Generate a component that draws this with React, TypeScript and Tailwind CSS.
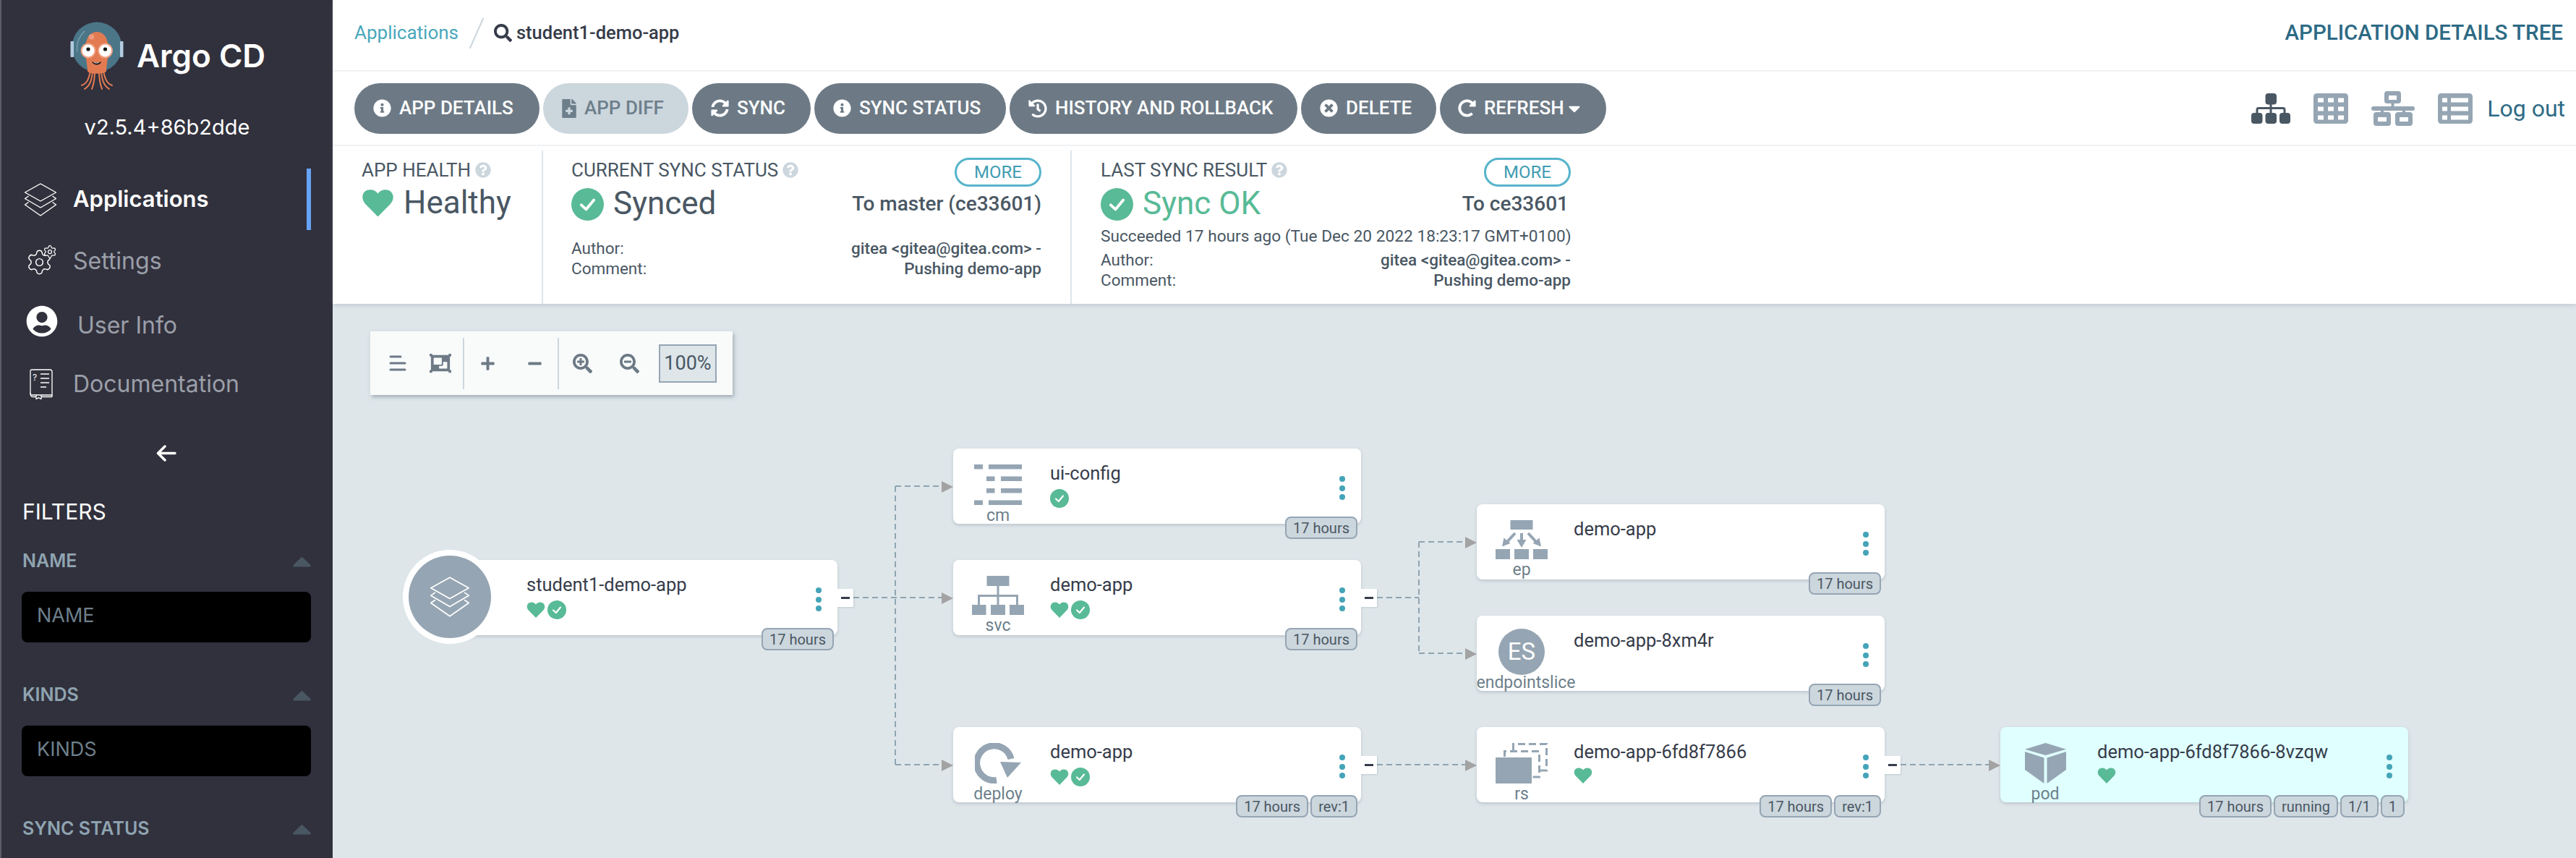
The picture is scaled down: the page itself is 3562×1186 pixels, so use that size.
import type { ReactNode } from "react";
import { Settings } from "lucide-react";
import {
  FaCaretDown,
  FaFileMedical,
  FaHistory,
  FaInfoCircle,
  FaMinus,
  FaObjectGroup,
  FaPlus,
  FaQuestionCircle,
  FaRedoAlt,
  FaSearch,
  FaSearchMinus,
  FaSearchPlus,
  FaSyncAlt,
  FaTimesCircle,
  FaUserCircle,
} from "react-icons/fa";

function ArgoLogo() {
  return (
    <svg viewBox="12 10 74 94" className="h-[94px] w-[74px] shrink-0">
      <circle cx="49" cy="45" r="34.5" fill="#4a7688" />
      <rect x="12.5" y="37" width="4.5" height="22" rx="1" fill="#b3cbe0" />
      <rect x="81" y="37" width="4.5" height="22" rx="1" fill="#b3cbe0" />
      <path d="M32 23 C25 30 20 40 22 52" fill="none" stroke="#7fa3b0" strokeWidth="1.2" />
      <g fill="none" stroke="#e27b52" strokeWidth="2" strokeLinecap="round">
        <path d="M40 78 C38 88 36 95 28 98" />
        <path d="M43 78 C42 90 40 98 32 103" />
        <path d="M46 78 C46 90 44 98 42 103" />
        <path d="M52 78 C52 90 54 98 56 103" />
        <path d="M55 78 C56 90 58 98 66 103" />
        <path d="M58 78 C60 88 62 95 70 98" />
      </g>
      <path
        d="M33 48 C33 32 40 24 49 24 C58 24 65 32 65 48 C65 60 62 70 62 78 C62 83 36 83 36 78 C36 70 33 60 33 48 Z"
        fill="#e27b52"
      />
      <circle cx="41.5" cy="31" r="3.8" fill="#f09a7c" />
      <circle cx="37" cy="50" r="10.5" fill="#f3a184" />
      <circle cx="60.5" cy="50" r="10.5" fill="#f3a184" />
      <circle cx="37" cy="50" r="8.5" fill="#ffffff" />
      <circle cx="60.5" cy="50" r="8.5" fill="#ffffff" />
      <circle cx="37" cy="48" r="2.6" fill="#111111" />
      <circle cx="60.5" cy="48" r="2.6" fill="#111111" />
      <path d="M42 65 C46 67 51 67 55 65 C54 71 44 71 42 65 Z" fill="#111111" />
      <path d="M44 66 C47 67 50 67 53 66 C51 68 46 68 44 66 Z" fill="#ffffff" />
    </svg>
  );
}

function LayersIcon({ className }: { className: string }) {
  return (
    <svg viewBox="0 0 46 46" className={className} fill="none" stroke="#ffffff" strokeWidth="1.4" strokeLinejoin="round">
      <path d="M23 1 L44.5 13 L23 25 L1.5 13 Z" />
      <path d="M6.5 18 L1.5 21.5 L23 34 L44.5 21.5 L39.5 18" />
      <path d="M6.5 26.5 L1.5 30 L23 45 L44.5 30 L39.5 26.5" />
    </svg>
  );
}

function DocIcon() {
  return (
    <svg viewBox="0 0 32 42" className="h-[42px] w-[32px]" fill="none" stroke="#ffffff" strokeWidth="1.3">
      <path d="M3 1 H28 Q31 1 31 4 V36 H3 Q1 36 1 33 V3 Q1 1 3 1 Z" />
      <path d="M1 33 Q1 38.5 4 38.5 H9 M16 38.5 H31 M31 36 V38.5" />
      <path d="M9 36 V42 L12.5 39.5 L16 42 V36" />
      <path d="M15 7 H27 M15 13 H27 M15 19 H27 M15 25 H23" />
      <text x="4" y="16" fontSize="12" fill="#ffffff" stroke="none" fontFamily="Inter, sans-serif">
        ?
      </text>
    </svg>
  );
}

function ArrowBack() {
  return (
    <svg viewBox="0 0 28 23" className="h-[23px] w-[28px]" fill="none" stroke="#ffffff" strokeWidth="3.5" strokeLinecap="round" strokeLinejoin="round">
      <path d="M12 2 L2.5 11.5 L12 21 M2.5 11.5 H26" />
    </svg>
  );
}

function FilterCaret() {
  return (
    <svg viewBox="0 0 25 15" className="h-[15px] w-[25px]">
      <path d="M12.5 2 L23.5 12.5 Q24 13.5 23 13.5 H2 Q1 13.5 1.5 12.5 Z" fill="#495763" stroke="#495763" strokeWidth="2" strokeLinejoin="round" />
    </svg>
  );
}

function FilterSection({ label, placeholder }: { label: string; placeholder?: string }) {
  return (
    <div className="ml-[28px] mr-[30px]">
      <div className="flex h-[30px] items-center justify-between pl-[1px]">
        <span className="text-[25px] font-semibold text-[#8fa4b1]">{label}</span>
        <FilterCaret />
      </div>
      {placeholder ? (
        <div className="mt-[27px] flex h-[70px] items-start rounded-[8px] bg-black pl-[21px] pt-[17px] text-[27px] leading-[32px] text-[#6d7f8b]">
          {placeholder}
        </div>
      ) : null}
    </div>
  );
}

function Sidebar() {
  return (
    <aside className="h-[1186px] w-[460px] shrink-0 overflow-hidden border-l-2 border-[#5b5c68] bg-[#31313d] font-[Inter,sans-serif] text-white">
      <div className="mt-[30px] flex h-[94px] items-center pl-[95px]">
        <ArgoLogo />
        <span className="ml-[18px] text-[44px] font-semibold leading-none">Argo CD</span>
      </div>
      <div className="mt-[34px] h-[36px] text-center text-[29px] leading-[36px]">v2.5.4+86b2dde</div>

      <nav className="relative mt-[39px]">
        <div className="flex h-[85px] items-center pl-[31px]">
          <LayersIcon className="h-[46px] w-[46px]" />
          <span className="ml-[22px] text-[31px] font-semibold">Applications</span>
        </div>
        <div className="absolute left-[422px] top-0 h-[85px] w-[6px] bg-[#66a3f5]" />
        <div className="flex h-[85px] items-center pl-[33px] text-[#9b9fa9]">
          <div className="relative h-[42px] w-[42px]">
            <Settings className="absolute left-0 top-[3px] h-[39px] w-[39px] text-white" strokeWidth={0.9} />
            <Settings className="absolute right-[-2px] top-[-2px] h-[20px] w-[20px] fill-[#31313d] text-white" strokeWidth={1.5} />
          </div>
          <span className="ml-[24px] text-[32px]">Settings</span>
        </div>
        <div className="flex h-[87px] items-center pl-[34px] text-[#9b9fa9]">
          <FaUserCircle className="mt-[-6px] h-[44px] w-[44px] text-white" />
          <span className="ml-[27px] mt-[6px] text-[32px]">User Info</span>
        </div>
        <div className="flex h-[82px] items-center pl-[39px] text-[#9b9fa9]">
          <DocIcon />
          <span className="ml-[28px] text-[32px]">Documentation</span>
        </div>
      </nav>

      <div className="mt-[43px] flex h-[23px] justify-center pr-[2px]">
        <ArrowBack />
      </div>
      <div className="mx-[29px] mt-[49px] h-[40px] text-[30px] leading-[40px]">FILTERS</div>
      <div className="mt-[34px] flex flex-col gap-[58px]">
        <FilterSection label="NAME" placeholder="NAME" />
        <FilterSection label="KINDS" placeholder="KINDS" />
        <FilterSection label="SYNC STATUS" />
      </div>
    </aside>
  );
}

const actions = [
  { label: "APP DETAILS", icon: <FaInfoCircle className="h-[25px] w-[25px]" />, width: "w-[256px]" },
  { label: "APP DIFF", icon: <FaFileMedical className="h-[26px] w-[20px]" />, width: "w-[201px]", disabled: true },
  { label: "SYNC", icon: <FaSyncAlt className="h-[25px] w-[25px]" />, width: "w-[164px]" },
  { label: "SYNC STATUS", icon: <FaInfoCircle className="h-[25px] w-[25px]" />, width: "w-[265px]" },
  { label: "HISTORY AND ROLLBACK", icon: <FaHistory className="h-[26px] w-[26px]" />, width: "w-[398px]" },
  { label: "DELETE", icon: <FaTimesCircle className="h-[25px] w-[25px]" />, width: "w-[187px]" },
];

function ActionButton({ label, icon, width, disabled }: { label: string; icon: ReactNode; width: string; disabled?: boolean }) {
  return (
    <div
      className={`flex h-[70px] items-center gap-[11px] rounded-full pl-[26px] text-[26px] font-medium ${width} ${
        disabled ? "bg-[#ccd6dd] text-[#6d7f8b]" : "bg-[#6d7a86] text-white"
      }`}
    >
      {icon}
      <span>{label}</span>
    </div>
  );
}

function TreeViewIcon() {
  return (
    <svg viewBox="0 0 54 42" className="h-[42px] w-[54px]" fill="#495763">
      <rect x="19.5" y="0" width="15.5" height="15.5" rx="4" />
      <rect x="0" y="27" width="15.5" height="15" rx="4" />
      <rect x="19.5" y="27" width="15.5" height="15" rx="4" />
      <rect x="39" y="27" width="15" height="15" rx="4" />
      <path d="M27 15 V28 M8 28 V22.5 Q8 20.5 10 20.5 H44 Q46 20.5 46 22.5 V28" fill="none" stroke="#495763" strokeWidth="3" />
    </svg>
  );
}

function GridViewIcon() {
  return (
    <svg viewBox="0 0 48 42" className="h-[42px] w-[48px]">
      <path
        fillRule="evenodd"
        fill="#95a5b3"
        d="M5 0 H43 Q48 0 48 5 V37 Q48 42 43 42 H5 Q0 42 0 37 V5 Q0 0 5 0 Z M6 6.5 V12.5 H14 V6.5 Z M20 6.5 V12.5 H28 V6.5 Z M34 6.5 V12.5 H42 V6.5 Z M6 18.5 V24.5 H14 V18.5 Z M20 18.5 V24.5 H28 V18.5 Z M34 18.5 V24.5 H42 V18.5 Z M6 30.5 V36.5 H14 V30.5 Z M20 30.5 V36.5 H28 V30.5 Z M34 30.5 V36.5 H42 V30.5 Z"
      />
    </svg>
  );
}

function NetworkViewIcon() {
  return (
    <svg viewBox="0 0 60 48" className="h-[48px] w-[60px]">
      <path
        fillRule="evenodd"
        fill="#95a5b3"
        d="M22 0 H37 Q41 0 41 4 V13 Q41 17 37 17 H22 Q18 17 18 13 V4 Q18 0 22 0 Z M24 6 V12 H35 V6 Z"
      />
      <path
        fillRule="evenodd"
        fill="#95a5b3"
        d="M7 29 H23 Q27 29 27 33 V44 Q27 48 23 48 H7 Q3 48 3 44 V33 Q3 29 7 29 Z M9 36 V42 H21 V36 Z M37 29 H53 Q57 29 57 33 V44 Q57 48 53 48 H37 Q33 48 33 44 V33 Q33 29 37 29 Z M39 36 V42 H51 V36 Z"
      />
      <rect x="0" y="21" width="60" height="6" rx="3" fill="#95a5b3" />
      <path d="M29.5 16 V22 M15 26 V30 M45 26 V30" stroke="#95a5b3" strokeWidth="4" />
    </svg>
  );
}

function ListViewIcon() {
  return (
    <svg viewBox="0 0 48 42" className="h-[42px] w-[48px]">
      <path
        fillRule="evenodd"
        fill="#95a5b3"
        d="M5 0 H43 Q48 0 48 5 V37 Q48 42 43 42 H5 Q0 42 0 37 V5 Q0 0 5 0 Z M6 6.5 V12.5 H13 V6.5 Z M18 6.5 V12.5 H42 V6.5 Z M6 18.5 V24.5 H13 V18.5 Z M18 18.5 V24.5 H42 V18.5 Z M6 30.5 V36.5 H13 V30.5 Z M18 30.5 V36.5 H42 V30.5 Z"
      />
    </svg>
  );
}

function HelpTip() {
  return <FaQuestionCircle className="h-[22px] w-[22px] text-[#ccd6dd]" />;
}

function HeartIcon({ className }: { className: string }) {
  return (
    <svg viewBox="0 0 26 22" className={className}>
      <path
        d="M13 22 L3 11.8 C-1.4 7 1 0.4 7 0.4 C9.8 0.4 12 2 13 3.6 C14 2 16.2 0.4 19 0.4 C25 0.4 27.4 7 23 11.8 Z"
        fill="#58ba96"
      />
    </svg>
  );
}

function CheckIcon({ className }: { className: string }) {
  return (
    <svg viewBox="0 0 26 26" className={className}>
      <circle cx="13" cy="13" r="13" fill="#58ba96" />
      <path d="M8 13.5 L11.8 17 L18 9.5" fill="none" stroke="#ffffff" strokeWidth="2.2" strokeLinecap="round" strokeLinejoin="round" />
    </svg>
  );
}

function MoreButton() {
  return (
    <div className="flex h-[40px] w-[120px] items-center justify-center rounded-full border-[3px] border-[#56b4cb] text-[24px] text-[#3f9db2]">
      MORE
    </div>
  );
}

function AuthorRows({ className }: { className: string }) {
  return (
    <div className={`text-[22.5px] leading-[28px] text-[#495763] ${className}`}>
      <div className="flex justify-between">
        <span>Author:</span>
        <span className="font-medium">gitea &lt;gitea@gitea.com&gt; -</span>
      </div>
      <div className="flex justify-between">
        <span>Comment:</span>
        <span className="font-medium">Pushing demo-app</span>
      </div>
    </div>
  );
}

function StatusLabel({ text }: { text: string }) {
  return (
    <div className="flex h-[34px] items-center gap-[6px] text-[26px] text-[#495763]">
      <span>{text}</span>
      <HelpTip />
    </div>
  );
}

function Header() {
  return (
    <div className="relative z-10 h-[420px] shrink-0 bg-white shadow-[0_2px_6px_rgba(109,122,134,0.25)]">
      <div className="flex h-[99px] items-center justify-between border-b-2 border-[#eff3f6] pb-[6px] pl-[30px] pr-[18px]">
        <div className="flex items-center">
          <span className="text-[26px] text-[#4aa8bb]">Applications</span>
          <span className="ml-[24px] mr-[23px] h-[46px] w-[2px] rotate-[24deg] bg-[#ccd6dd]" />
          <FaSearch className="h-[25px] w-[25px] text-[#363c4a]" />
          <span className="ml-[6px] text-[25.5px] font-medium text-[#363c4a]">student1-demo-app</span>
        </div>
        <span className="text-[29.5px] font-medium text-[#2d6a85]">APPLICATION DETAILS TREE</span>
      </div>

      <div className="flex h-[103px] items-center justify-between border-b-2 border-[#eff3f6] pl-[30px] pr-[15px]">
        <div className="flex gap-[5px]">
          {actions.map((action) => (
            <ActionButton key={action.label} {...action} />
          ))}
          <div className="flex h-[70px] w-[230px] items-center rounded-full bg-[#6d7a86] pl-[25px] text-[26px] font-medium text-white">
            <FaRedoAlt className="h-[25px] w-[25px]" />
            <span className="ml-[11px]">REFRESH</span>
            <FaCaretDown className="ml-[5px] h-[26px] w-[18px]" />
          </div>
        </div>
        <div className="flex items-center">
          <TreeViewIcon />
          <div className="ml-[32px]">
            <GridViewIcon />
          </div>
          <div className="ml-[32px]">
            <NetworkViewIcon />
          </div>
          <div className="ml-[32px]">
            <ListViewIcon />
          </div>
          <span className="ml-[20px] text-[32px] text-[#2d6a85]">Log out</span>
        </div>
      </div>

      <div className="flex h-[218px]">
        <div className="mt-[6px] w-[291px] border-r-2 border-[#dee6eb] pl-[40px] pt-[10px]">
          <StatusLabel text="APP HEALTH" />
          <div className="mt-[3px] flex items-center gap-[13px] text-[44px] leading-[50px] text-[#495763]">
            <HeartIcon className="h-[39px] w-[45px]" />
            <span>Healthy</span>
          </div>
        </div>
        <div className="mt-[6px] w-[731px] border-r-2 border-[#dee6eb] pl-[39px] pr-[40px] pt-[10px]">
          <div className="flex items-start justify-between">
            <StatusLabel text="CURRENT SYNC STATUS" />
            <MoreButton />
          </div>
          <div className="mt-[1px] flex h-[46px] items-center justify-between">
            <div className="flex items-center gap-[13px] text-[44px] text-[#495763]">
              <CheckIcon className="h-[45px] w-[45px]" />
              <span className="mt-[-2px]">Synced</span>
            </div>
            <span className="text-[28px] font-medium text-[#495763]">To master (ce33601)</span>
          </div>
          <AuthorRows className="mt-[24px]" />
        </div>
        <div className="mt-[6px] w-[690px] pl-[40px] pt-[10px]">
          <div className="flex items-start justify-between">
            <StatusLabel text="LAST SYNC RESULT" />
            <MoreButton />
          </div>
          <div className="mt-[1px] flex h-[46px] items-center justify-between">
            <div className="flex items-center gap-[13px] text-[44px] text-[#58ba96]">
              <CheckIcon className="h-[45px] w-[45px]" />
              <span className="mt-[-2px]">Sync OK</span>
            </div>
            <span className="pr-[3px] text-[28px] font-medium text-[#495763]">To ce33601</span>
          </div>
          <div className="mt-[8px] h-[28px] whitespace-nowrap text-[22.7px] leading-[28px] text-[#495763]">
            Succeeded 17 hours ago (Tue Dec 20 2022 18:23:17 GMT+0100)
          </div>
          <AuthorRows className="mt-[4px]" />
        </div>
      </div>
    </div>
  );
}

function GraphToolbar() {
  return (
    <div className="absolute left-[52px] top-[38px] flex h-[88px] w-[501px] items-center bg-[#f9fbfb] text-[#6d7a86] shadow-[2px_3px_5px_rgba(109,122,134,0.5)]">
      <div className="flex h-[71px] w-[130px] items-center border-r-2 border-[#ccd6dd] pl-[26px]">
        <svg viewBox="0 0 24 24" className="h-[24px] w-[24px]" stroke="currentColor" strokeWidth="3" strokeLinecap="round">
          <path d="M2 3 H16 M2 12 H22 M2 21 H22" />
        </svg>
        <FaObjectGroup className="ml-[32px] h-[30px] w-[30px]" />
      </div>
      <div className="flex h-[71px] w-[131px] items-center border-r-2 border-[#ccd6dd] pl-[22px]">
        <FaPlus className="h-[21px] w-[21px]" />
        <FaMinus className="ml-[44px] h-[21px] w-[21px]" />
      </div>
      <FaSearchPlus className="ml-[19px] h-[27px] w-[27px]" />
      <FaSearchMinus className="ml-[38px] h-[27px] w-[27px]" />
      <div className="ml-[27px] flex h-[53px] w-[80px] items-center justify-center border-2 border-[#95a5b3] bg-[#dee6ea] text-[27px] text-[#495763]">
        100%
      </div>
    </div>
  );
}

function CmIcon() {
  return (
    <svg viewBox="0 0 66 56" className="h-[56px] w-[66px]" fill="#95a5b3">
      <rect x="0" y="0" width="12" height="6.5" />
      <rect x="20" y="0" width="46" height="6.5" />
      <rect x="17" y="16.5" width="11.5" height="6.5" />
      <rect x="37" y="16.5" width="29" height="6.5" />
      <rect x="17" y="33" width="11.5" height="6.5" />
      <rect x="37" y="33" width="29" height="6.5" />
      <rect x="0" y="49.5" width="12" height="6.5" />
      <rect x="20" y="49.5" width="46" height="6.5" />
    </svg>
  );
}

function SvcIcon() {
  return (
    <svg viewBox="0 0 72 54" className="h-[54px] w-[72px]" fill="#95a5b3">
      <rect x="20.5" y="0" width="31" height="14" />
      <rect x="0" y="40" width="19.5" height="14" />
      <rect x="26" y="40" width="20" height="14" />
      <rect x="52" y="40" width="20" height="14" />
      <path d="M36 14 V40 M9.5 40 V27.5 H62.5 V40" fill="none" stroke="#95a5b3" strokeWidth="3" />
    </svg>
  );
}

function DeployIcon() {
  return (
    <svg viewBox="0 0 64 56" className="h-[56px] w-[64px]">
      <path d="M30 51.5 A 24 24 0 1 1 50 22" fill="none" stroke="#95a5b3" strokeWidth="9" />
      <path d="M35 26 L64 27 L45 48 Z" fill="#95a5b3" />
    </svg>
  );
}

function EpIcon() {
  return (
    <svg viewBox="0 0 72 54" className="h-[54px] w-[72px]" fill="#95a5b3">
      <rect x="20.5" y="0" width="31" height="13" />
      <rect x="0" y="40" width="20" height="14" />
      <rect x="26" y="40" width="20" height="14" />
      <rect x="52" y="40" width="20" height="14" />
      <path d="M36 18 V30 M27 18 L15 31 M45 18 L57 31" fill="none" stroke="#95a5b3" strokeWidth="4" />
      <path d="M29.5 27 H42.5 L36 38 Z M9 36.5 L11.5 24.5 L20.5 32 Z M63 36.5 L60.5 24.5 L51.5 32 Z" />
    </svg>
  );
}

function RsIcon() {
  return (
    <svg viewBox="0 0 72 56" className="h-[56px] w-[72px]">
      <path d="M24.5 10 V1.5 H70.5 V38 H62" fill="none" stroke="#95a5b3" strokeWidth="3" strokeDasharray="10 5" />
      <path d="M12.5 19 V11.5 H60.5 V47 H51" fill="none" stroke="#95a5b3" strokeWidth="3" strokeDasharray="10 5" />
      <rect x="0" y="20" width="50" height="36" rx="1" fill="#95a5b3" />
    </svg>
  );
}

function PodIcon() {
  return (
    <svg viewBox="0 0 57 56" className="h-[56px] w-[57px]" fill="#95a5b3">
      <path d="M28.5 0 L57 8.8 L28.5 17 L0 8.8 Z" />
      <path d="M0 12 L26.5 20.5 V56 L0 37 Z" />
      <path d="M57 12 L30.5 20.5 V56 L57 37 Z" />
    </svg>
  );
}

function EsIcon() {
  return (
    <div className="flex h-[64px] w-[64px] items-center justify-center rounded-full bg-[#95a5b3] text-[33px] text-white">ES</div>
  );
}

type GraphNodeProps = {
  position: string;
  name: string;
  kind?: string;
  icon?: ReactNode;
  heart?: boolean;
  check?: boolean;
  badges: string[];
  collapse?: boolean;
  labelClass?: string;
  tone?: string;
};

function GraphNode({
  position,
  name,
  kind,
  icon,
  heart,
  check,
  badges,
  collapse,
  labelClass = "",
  tone = "bg-white",
}: GraphNodeProps) {
  return (
    <div className={`absolute flex h-[104px] w-[564px] rounded-[8px] shadow-[0_2px_4px_rgba(109,122,134,0.3)] ${tone} ${position}`}>
      <div className="flex w-[124px] shrink-0 flex-col items-center pt-[22px]">
        <div className="flex h-[56px] items-center justify-center">{icon}</div>
        <span className={`mt-[2px] whitespace-nowrap text-[23px] leading-[26px] text-[#6d7f8b] ${labelClass}`}>{kind}</span>
      </div>
      <NodeBody name={name} heart={heart} check={check} left="ml-[10px]" />
      <NodeExtras badges={badges} collapse={collapse} />
    </div>
  );
}

function NodeBody({ name, heart, check, left }: { name: string; heart?: boolean; check?: boolean; left: string }) {
  return (
    <div className={left}>
      <div className="mt-[18px] h-[32px] whitespace-nowrap text-[25.5px] leading-[32px] text-[#363c4a]">{name}</div>
      <div className="mt-[6px] flex items-center gap-[3px]">
        {heart ? <HeartIcon className="h-[22px] w-[26px]" /> : null}
        {check ? <CheckIcon className="h-[26px] w-[26px]" /> : null}
      </div>
    </div>
  );
}

function NodeExtras({ badges, collapse }: { badges: string[]; collapse?: boolean }) {
  return (
    <>
      <div className="absolute right-[22px] top-[38px] flex flex-col gap-[4.5px]">
        <span className="h-[8px] w-[8px] rounded-full bg-[#44a4b8]" />
        <span className="h-[8px] w-[8px] rounded-full bg-[#44a4b8]" />
        <span className="h-[8px] w-[8px] rounded-full bg-[#44a4b8]" />
      </div>
      <div className="absolute right-[5px] top-[94px] flex gap-[3px]">
        {badges.map((badge) => (
          <span
            key={badge}
            className="flex h-[31px] items-center whitespace-nowrap rounded-[8px] border-2 border-[#95a5b3] bg-[#ccd6dd] px-[9px] text-[20px] text-[#495763]"
          >
            {badge}
          </span>
        ))}
      </div>
      {collapse ? (
        <div className="absolute left-full top-[40px] flex h-[25px] w-[22px] items-center justify-center bg-white shadow-[1px_1px_2px_rgba(109,122,134,0.25)]">
          <span className="h-[2.5px] w-[12px] bg-[#363c4a]" />
        </div>
      ) : null}
    </>
  );
}

function RootNode() {
  return (
    <div className="absolute left-[160px] top-[354px] flex h-[104px] w-[538px] rounded-[8px] bg-white shadow-[0_2px_4px_rgba(109,122,134,0.3)]">
      <div className="absolute left-[-63px] top-[-14px] flex h-[130px] w-[130px] items-center justify-center rounded-full bg-white">
        <div className="flex h-[114px] w-[114px] items-center justify-center rounded-full bg-[#95a5b3]">
          <LayersIcon className="h-[56px] w-[58px]" />
        </div>
      </div>
      <NodeBody name="student1-demo-app" heart check left="ml-[108px]" />
      <NodeExtras badges={["17 hours"]} collapse />
    </div>
  );
}

// connector paths in canvas coordinates
function Connectors() {
  const lines = [
    "M720 406 H842",
    "M778 252 V637",
    "M778 252 H842",
    "M778 637 H842",
    "M1444 406 H1502",
    "M1502 329 V483",
    "M1502 329 H1566",
    "M1502 483 H1566",
    "M1444 637 H1566",
    "M2168 637 H2290",
  ];
  const arrows = [
    [842, 252],
    [842, 406],
    [842, 637],
    [1566, 329],
    [1566, 483],
    [1566, 637],
    [2290, 637],
  ];
  return (
    <svg className="absolute left-0 top-0 h-[766px] w-[3102px]" viewBox="0 0 3102 766" fill="none">
      {lines.map((d) => (
        <path key={d} d={d} stroke="#8fa4b1" strokeWidth="2" strokeDasharray="8 5" />
      ))}
      {arrows.map(([x, y]) => (
        <path key={`${x}-${y}`} d={`M${x} ${y - 7} L${x + 16} ${y + 1} L${x} ${y + 9} Z`} fill="#a3a3a3" />
      ))}
    </svg>
  );
}

function Graph() {
  return (
    <div className="relative flex-1 overflow-hidden bg-[#dee6ea]">
      <Connectors />
      <GraphToolbar />
      <RootNode />
      <GraphNode position="left-[858px] top-[200px]" name="ui-config" kind="cm" icon={<CmIcon />} check badges={["17 hours"]} />
      <GraphNode position="left-[858px] top-[354px]" name="demo-app" kind="svc" icon={<SvcIcon />} heart check badges={["17 hours"]} collapse />
      <GraphNode position="left-[858px] top-[585px]" name="demo-app" kind="deploy" icon={<DeployIcon />} heart check badges={["17 hours", "rev:1"]} collapse />
      <GraphNode position="left-[1582px] top-[277px]" name="demo-app" kind="ep" icon={<EpIcon />} badges={["17 hours"]} />
      <GraphNode position="left-[1582px] top-[431px]" name="demo-app-8xm4r" kind="endpointslice" icon={<EsIcon />} labelClass="ml-[12px]" badges={["17 hours"]} />
      <GraphNode position="left-[1582px] top-[585px]" name="demo-app-6fd8f7866" kind="rs" icon={<RsIcon />} heart badges={["17 hours", "rev:1"]} collapse />
      <GraphNode position="left-[2306px] top-[585px]" name="demo-app-6fd8f7866-8vzqw" kind="pod" icon={<PodIcon />} heart badges={["17 hours", "running", "1/1", "1"]} tone="bg-[#e0ffff]" />
    </div>
  );
}

export default function App() {
  return (
    <div className="flex h-[1186px] w-[3562px] overflow-hidden font-[Roboto,sans-serif]">
      <Sidebar />
      <main className="flex min-w-0 flex-1 flex-col">
        <Header />
        <Graph />
      </main>
    </div>
  );
}
